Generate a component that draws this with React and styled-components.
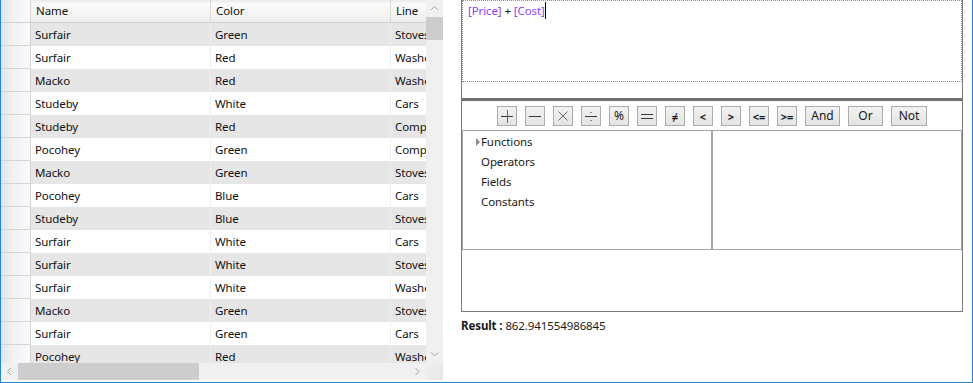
import React from "react";
import styled, { createGlobalStyle } from "styled-components";

const GlobalStyle = createGlobalStyle`
  html, body { margin: 0; padding: 0; overflow: hidden; background: #fff; }
  body { font-family: "Noto Sans", "Open Sans", sans-serif; font-size: 11.5px; letter-spacing: -0.1px; color: #1a1a1a; }
  * { box-sizing: border-box; }
`;

const rows = [
  ["Surfair", "Green", "Stoves"],
  ["Surfair", "Red", "Washers"],
  ["Macko", "Red", "Washers"],
  ["Studeby", "White", "Cars"],
  ["Studeby", "Red", "Computers"],
  ["Pocohey", "Green", "Computers"],
  ["Macko", "Green", "Stoves"],
  ["Pocohey", "Blue", "Cars"],
  ["Studeby", "Blue", "Stoves"],
  ["Surfair", "White", "Cars"],
  ["Surfair", "White", "Stoves"],
  ["Surfair", "White", "Washers"],
  ["Macko", "Green", "Stoves"],
  ["Surfair", "Green", "Cars"],
  ["Pocohey", "Red", "Washers"],
];

const Frame = styled.div`
  width: 973px;
  height: 383px;
  border: 1px solid #2186d6;
  border-top: none;
  display: flex;
  align-items: flex-start;
  background: #fff;
`;

const GridPanel = styled.div`
  width: 443px;
  height: 381px;
  display: grid;
  grid-template-columns: 425px 17px;
  grid-template-rows: 363px 17px;
  flex-shrink: 0;
`;

const Viewport = styled.div`
  overflow: hidden;
  background: #fff;
`;

const Row = styled.div`
  display: flex;
  height: 23px;
  white-space: nowrap;
  background: ${(p) => (p.$alt ? "#e6e6e6" : "#ffffff")};
`;

const HeaderRow = styled(Row)`
  background: linear-gradient(#e9e9e9 0px, #fbfbfb 4px, #f4f4f4 14px, #ececec 100%);
  border-bottom: 1px solid #d0d0d0;
`;

const RowHeader = styled.div`
  width: 30px;
  flex-shrink: 0;
  background: linear-gradient(90deg, #e4e4e4 0%, #f1f1f1 40%, #fafafa 100%);
  border-right: 1px solid #d5d5d5;
  border-bottom: ${(p) => (p.$head ? "none" : "1px solid #d6d6d6")};
`;

const Cell = styled.div`
  width: 180px;
  flex-shrink: 0;
  padding: 0 0 0 4px;
  line-height: 23px;
  border-right: 1px solid ${(p) => (p.$head ? "#dadada" : "#efefef")};
  overflow: hidden;
  color: #111;
`;

const HeadCell = styled(Cell)`
  line-height: 22px;
  padding-left: 5px;
`;

const VScroll = styled.div`
  background: #f0f0f0;
  display: flex;
  flex-direction: column;
`;

const HScroll = styled.div`
  background: #f0f0f0;
  display: flex;
`;

const Corner = styled.div`
  background: linear-gradient(135deg, #f0f0f0, #e6e6e6);
`;

const Arrow = styled.div`
  width: 17px;
  height: 17px;
  flex-shrink: 0;
  display: flex;
  align-items: center;
  justify-content: center;
`;

const VThumb = styled.div`
  height: 23px;
  background: #cdcdcd;
`;

const HThumb = styled.div`
  width: 181px;
  height: 17px;
  background: #cdcdcd;
`;

const Fill = styled.div`
  flex: 1;
`;

const RightPanel = styled.div`
  margin-left: 17px;
  width: 502px;
  flex-shrink: 0;
  display: flex;
  flex-direction: column;
`;

const Box = styled.div`
  height: 312px;
  border: 1px solid #7b7b7b;
  border-top: none;
  display: flex;
  flex-direction: column;
`;

const Editor = styled.div`
  height: 82px;
  border: 1px dotted #8a8a8a;
  padding: 1px 0 0 5px;
  line-height: 17px;
  white-space: nowrap;
`;

const Field = styled.span`
  color: #8f3ef0;
`;

const Caret = styled.span`
  display: inline-block;
  width: 1px;
  height: 17px;
  background: #000;
  vertical-align: top;
`;

const Spacer = styled.div`
  height: 16px;
`;

const Splitter = styled.div`
  height: 3px;
  background: #6f6f6f;
`;

const ButtonRow = styled.div`
  display: flex;
  justify-content: center;
  gap: 8px;
  margin-top: 5px;
`;

const OpButton = styled.button`
  width: ${(p) => p.$w || 20}px;
  height: 20px;
  padding: 0;
  border: 1px solid #adadad;
  background: linear-gradient(#f2f2f2, #e3e3e3);
  display: flex;
  align-items: center;
  justify-content: center;
  font-family: "Noto Sans", sans-serif;
  font-size: ${(p) => (p.$bold ? "11px" : "12px")};
  font-weight: ${(p) => (p.$bold ? 700 : 400)};
  color: #1a1a1a;
  line-height: 1;
`;

const Lists = styled.div`
  display: grid;
  grid-template-columns: 250px 250px;
  margin-top: 4px;
  height: 120px;
`;

const ListBox = styled.div`
  border: 1px solid #a2a6aa;
  padding-top: 1px;
`;

const TreeItem = styled.div`
  height: 20px;
  line-height: 20px;
  padding-left: 18px;
  position: relative;
`;

const Expander = styled.span`
  position: absolute;
  left: 13px;
  top: 6px;
  width: 0;
  height: 0;
  border-top: 4px solid transparent;
  border-bottom: 4px solid transparent;
  border-left: 4px solid #8c8c8c;
`;

const Result = styled.div`
  margin-top: 6px;
  line-height: 16px;
`;

const Bold = styled.span`
  font-weight: 700;
`;

const Chevron = ({ dir }) => {
  const pts = {
    up: "1,5 4.5,1.5 8,5",
    down: "1,1.5 4.5,5 8,1.5",
    left: "5,1 1.5,4.5 5,8",
    right: "1.5,1 5,4.5 1.5,8",
  }[dir];
  const vertical = dir === "up" || dir === "down";
  return (
    <svg width={vertical ? 9 : 7} height={vertical ? 7 : 9} viewBox={vertical ? "0 0 9 7" : "0 0 7 9"}>
      <polyline points={pts} fill="none" stroke="#a3a3a3" strokeWidth="1" />
    </svg>
  );
};

const Glyph = ({ kind }) => {
  const s = { stroke: "#3a3a3a", strokeWidth: 1, fill: "none" };
  return (
    <svg width="14" height="14" viewBox="0 0 14 14">
      {kind === "plus" && (
        <>
          <line x1="1" y1="7.5" x2="13" y2="7.5" {...s} />
          <line x1="7.5" y1="1" x2="7.5" y2="14" stroke="#2d6fc0" strokeWidth="1" />
        </>
      )}
      {kind === "minus" && <line x1="1" y1="7.5" x2="13" y2="7.5" {...s} />}
      {kind === "times" && (
        <>
          <line x1="2.5" y1="2.5" x2="11.5" y2="11.5" stroke="#6a6a6a" strokeWidth="1" />
          <line x1="11.5" y1="2.5" x2="2.5" y2="11.5" stroke="#6a6a6a" strokeWidth="1" />
        </>
      )}
      {kind === "div" && (
        <>
          <line x1="1" y1="7.5" x2="13" y2="7.5" {...s} />
          <rect x="6.5" y="3" width="1" height="1" fill="#3a3a3a" />
          <rect x="6.5" y="11" width="1" height="1" fill="#3a3a3a" />
        </>
      )}
      {kind === "eq" && (
        <>
          <line x1="1" y1="5.5" x2="13" y2="5.5" {...s} />
          <line x1="1" y1="9.5" x2="13" y2="9.5" {...s} />
        </>
      )}
    </svg>
  );
};

export default function App() {
  return (
    <>
      <GlobalStyle />
      <Frame>
        <GridPanel>
          <Viewport>
            <HeaderRow>
              <RowHeader $head />
              <HeadCell $head>Name</HeadCell>
              <HeadCell $head>Color</HeadCell>
              <HeadCell $head>Line</HeadCell>
            </HeaderRow>
            {rows.map((r, i) => (
              <Row key={i} $alt={i % 2 === 0}>
                <RowHeader />
                <Cell>{r[0]}</Cell>
                <Cell>{r[1]}</Cell>
                <Cell>{r[2]}</Cell>
              </Row>
            ))}
          </Viewport>
          <VScroll>
            <Arrow><Chevron dir="up" /></Arrow>
            <VThumb />
            <Fill />
            <Arrow><Chevron dir="down" /></Arrow>
          </VScroll>
          <HScroll>
            <Arrow><Chevron dir="left" /></Arrow>
            <HThumb />
            <Fill />
            <Arrow><Chevron dir="right" /></Arrow>
          </HScroll>
          <Corner />
        </GridPanel>
        <RightPanel>
          <Box>
            <Editor>
              <Field>[Price]</Field> + <Field>[Cost]</Field>
              <Caret />
            </Editor>
            <Spacer />
            <Splitter />
            <ButtonRow>
              <OpButton><Glyph kind="plus" /></OpButton>
              <OpButton><Glyph kind="minus" /></OpButton>
              <OpButton><Glyph kind="times" /></OpButton>
              <OpButton><Glyph kind="div" /></OpButton>
              <OpButton>%</OpButton>
              <OpButton><Glyph kind="eq" /></OpButton>
              <OpButton $bold>≠</OpButton>
              <OpButton $bold>&lt;</OpButton>
              <OpButton $bold>&gt;</OpButton>
              <OpButton $bold>&lt;=</OpButton>
              <OpButton $bold>&gt;=</OpButton>
              <OpButton $w={35}>And</OpButton>
              <OpButton $w={35}>Or</OpButton>
              <OpButton $w={36}>Not</OpButton>
            </ButtonRow>
            <Lists>
              <ListBox>
                <TreeItem><Expander />Functions</TreeItem>
                <TreeItem>Operators</TreeItem>
                <TreeItem>Fields</TreeItem>
                <TreeItem>Constants</TreeItem>
              </ListBox>
              <ListBox />
            </Lists>
          </Box>
          <Result>
            <Bold>Result :</Bold> 862.941554986845
          </Result>
        </RightPanel>
      </Frame>
    </>
  );
}
